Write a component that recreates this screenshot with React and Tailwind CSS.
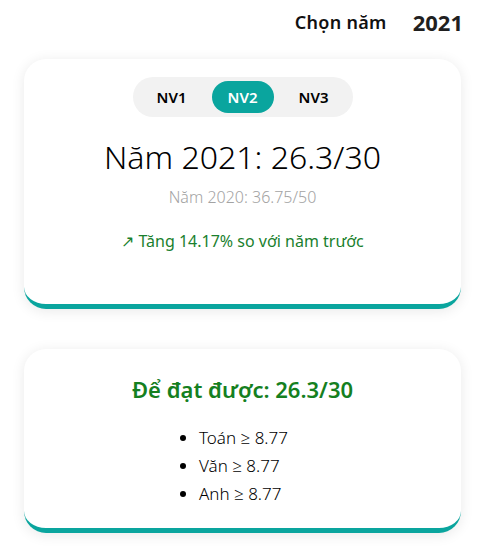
export default function App() {
  const font = { fontFamily: '"Noto Sans", "Open Sans", sans-serif' };
  return (
    <div className="w-[483px] h-[558px] bg-white text-black" style={font}>
      <div className="flex items-center justify-end h-[43px] pr-5 gap-[26px]">
        <span className="text-[18px] font-semibold text-[#111] leading-[24px] tracking-[0.3px]">Chọn năm</span>
        <span className="text-[22px] font-bold text-[#1f1f1f] leading-[28px]">2021</span>
      </div>
      <div className="ml-6 w-[437px] mt-4 h-[250px] rounded-[22px] bg-white border-b-[5px] border-[#0aa59e] shadow-[0_2px_14px_rgba(0,0,0,0.09)] flex flex-col items-center">
        <div className="mt-[18px] flex items-center h-10 w-[220px] rounded-full bg-[#f2f2f2] px-1 justify-between">
          <button className="w-[70px] h-8 rounded-full text-[15px] font-semibold">NV1</button>
          <button className="w-[62px] h-8 rounded-full bg-[#0aa59e] text-white text-[15px] font-semibold">NV2</button>
          <button className="w-[70px] h-8 rounded-full text-[15px] font-semibold">NV3</button>
        </div>
        <div className="mt-[20px] text-[32px] font-light leading-[40px]">Năm 2021: 26.3/30</div>
        <div className="mt-[9px] text-[16px] font-light text-[#a3a3a3] leading-[22px]">Năm 2020: 36.75/50</div>
        <div className="mt-[22px] text-[16px] text-[#1a7f2e] leading-[22px]">↗ Tăng 14.17% so với năm trước</div>
      </div>
      <div className="ml-6 w-[437px] mt-10 h-[184px] rounded-[22px] bg-white border-b-[5px] border-[#0aa59e] shadow-[0_2px_14px_rgba(0,0,0,0.09)] flex flex-col">
        <div className="mt-[25px] text-[22px] font-semibold text-[#15801f] leading-[30px] text-center">Để đạt được: 26.3/30</div>
        <ul className="mt-[22px] ml-[150px] list-disc pl-[25px] text-[17px] font-light flex flex-col gap-[5px] leading-[23px]">
          <li>Toán ≥ 8.77</li>
          <li>Văn ≥ 8.77</li>
          <li>Anh ≥ 8.77</li>
        </ul>
      </div>
    </div>
  );
}
